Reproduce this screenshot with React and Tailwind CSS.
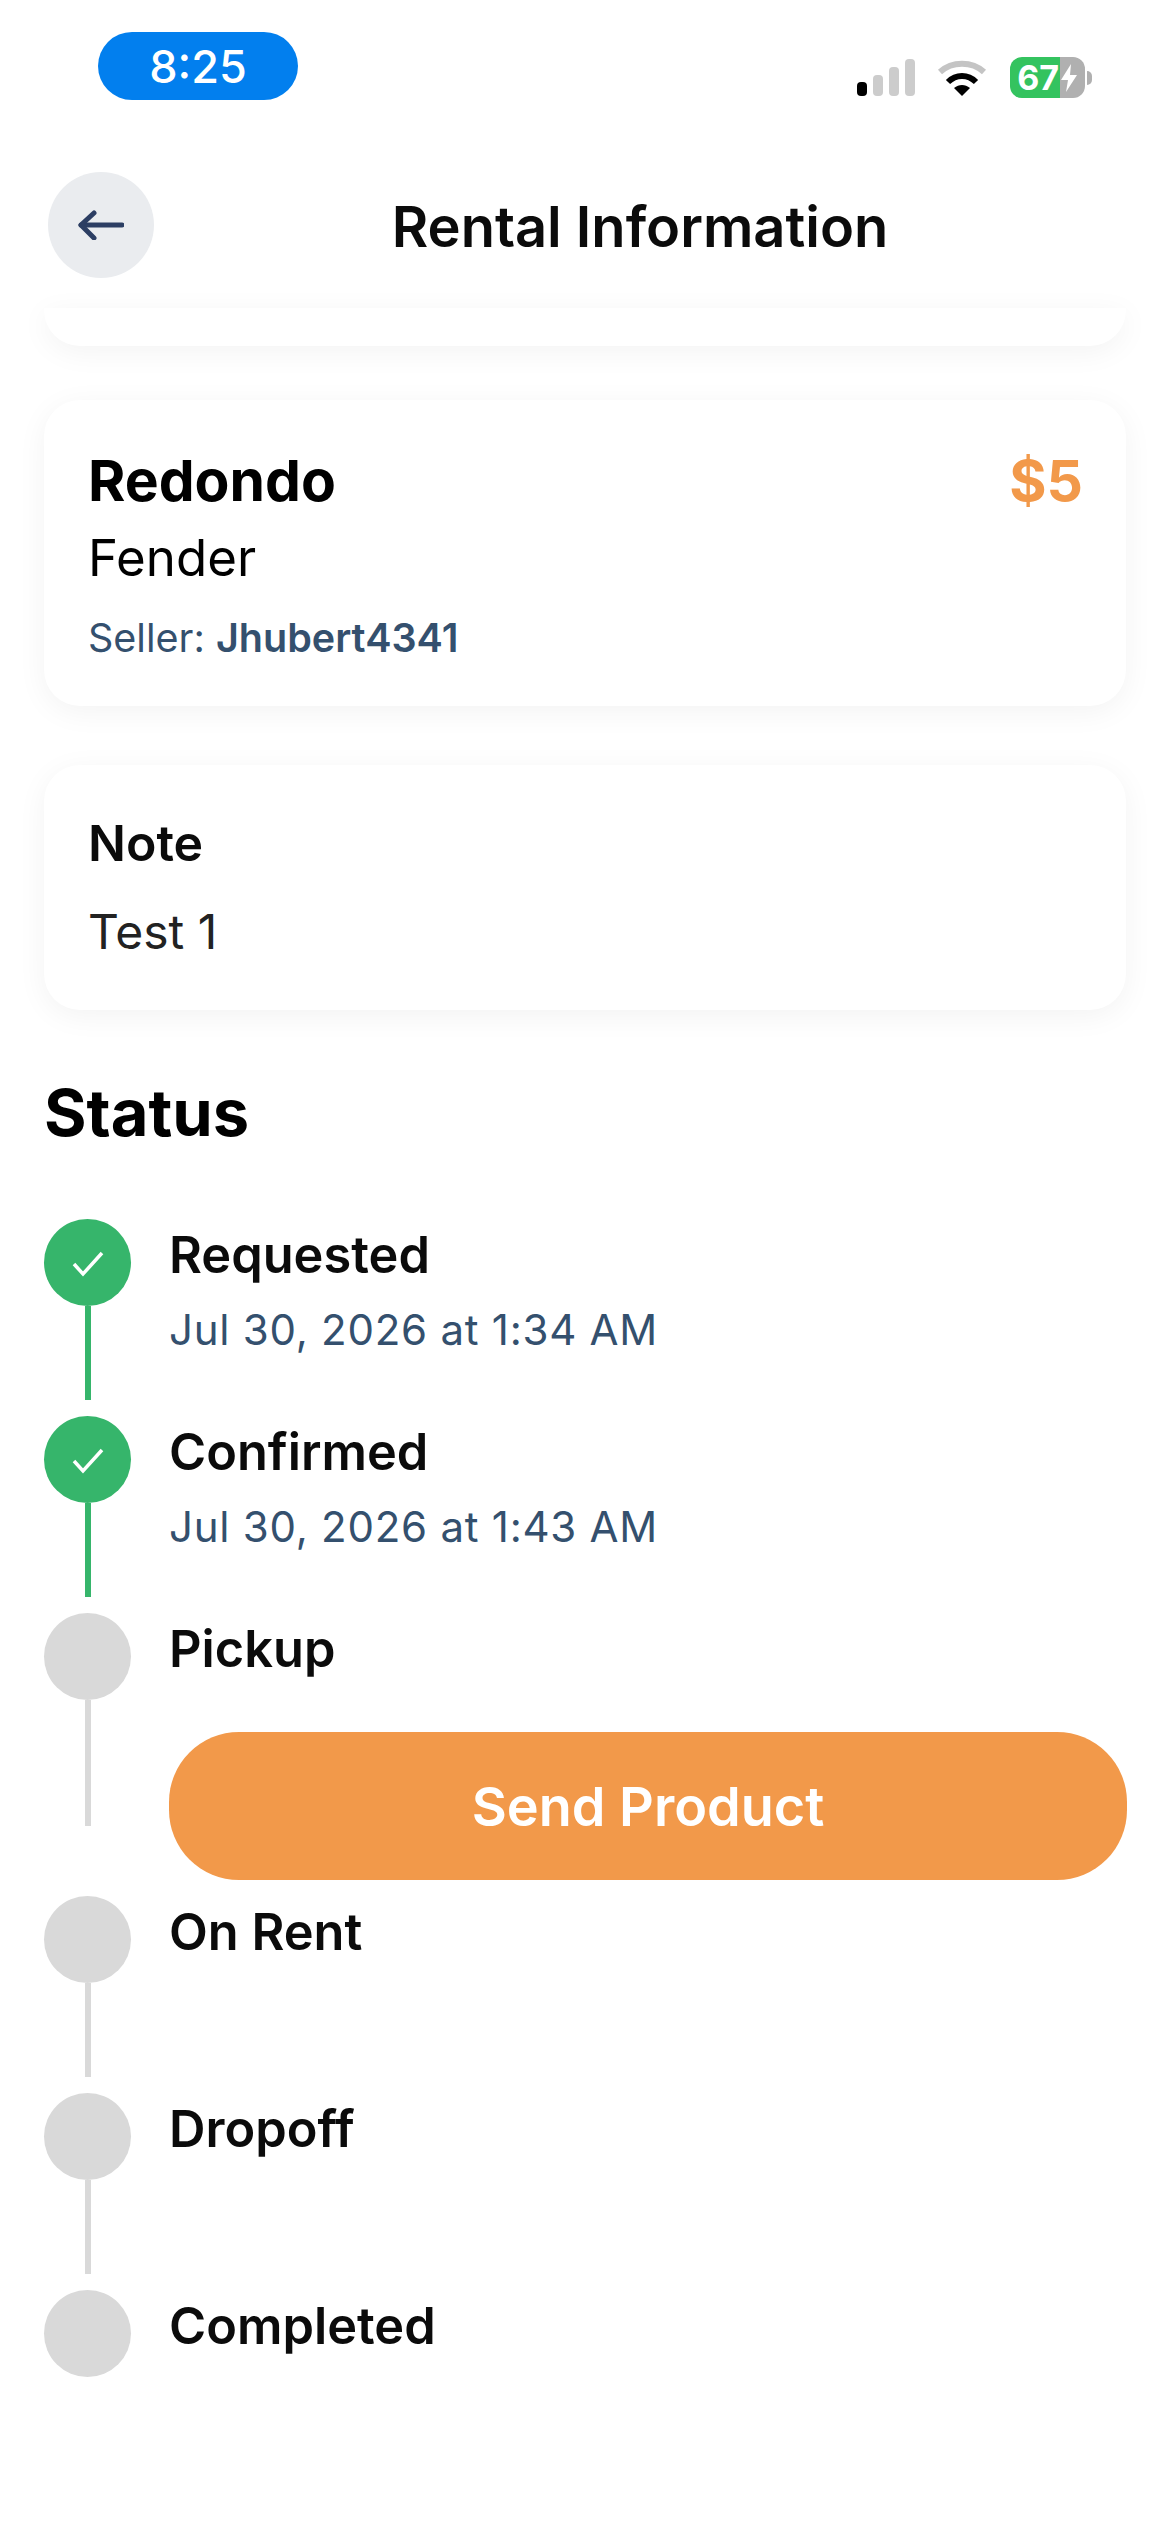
import React from 'react';

const steps = [
  { title: 'Requested', date: 'Jul 30, 2026 at 1:34 AM', done: true },
  { title: 'Confirmed', date: 'Jul 30, 2026 at 1:43 AM', done: true },
  { title: 'Pickup', action: 'Send Product', tall: true },
  { title: 'On Rent' },
  { title: 'Dropoff' },
  { title: 'Completed', last: true },
];

const SignalIcon = () => (
  <svg width="58" height="37" viewBox="0 0 58 37">
    <rect x="0" y="23" width="10" height="14" rx="4" fill="#000" />
    <rect x="16" y="16" width="10" height="21" rx="4" fill="#ccc" />
    <rect x="32" y="8" width="10" height="29" rx="4" fill="#ccc" />
    <rect x="48" y="0" width="10" height="37" rx="4" fill="#ccc" />
  </svg>
);

const WifiIcon = () => (
  <svg width="50" height="38" viewBox="0 0 50 38">
    <path d="M3 13 C15 2 35 2 47 13" fill="none" stroke="#c4c4c4" strokeWidth="6" />
    <path d="M11 23 C19 15 31 15 39 23" fill="none" stroke="#000" strokeWidth="6" />
    <path d="M17 29 C22 25 28 25 33 29 L25 37 Z" fill="#000" />
  </svg>
);

const BatteryIcon = () => (
  <div className="flex items-center gap-[2px]">
    <div className="flex w-[75px] h-[41px] rounded-[12px] overflow-hidden">
      <div className="w-[50px] bg-[#34C35F] flex items-center justify-end pr-[1px]">
        <span className="text-white text-[34px] font-bold leading-none">67</span>
      </div>
      <div className="flex-1 bg-[#B0B0B0] flex items-center justify-start">
        <svg width="18" height="28" viewBox="0 0 18 28">
          <path d="M11 0 L1 16 H8 L6 28 L17 11 H10 Z" fill="#fff" />
        </svg>
      </div>
    </div>
    <div className="w-[5px] h-[14px] rounded-r-full bg-[#B0B0B0]" />
  </div>
);

const StatusBar = () => (
  <div className="h-[106px] flex justify-between">
    <div className="ml-[98px] mt-[32px] w-[200px] h-[68px] rounded-full bg-[#027FEE] flex items-center justify-center text-white text-[45px] font-medium leading-none">
      8:25
    </div>
    <div className="mt-[57px] mr-[78px] h-[41px] flex items-center">
      <SignalIcon />
      <div className="ml-[22px] mr-[23px]">
        <WifiIcon />
      </div>
      <BatteryIcon />
    </div>
  </div>
);

const Header = () => (
  <div className="relative h-[202px] pt-[66px] pl-[48px] flex items-start">
    <button className="w-[106px] h-[106px] rounded-full bg-[#EAECEF] flex items-center justify-center">
      <svg width="46" height="30" viewBox="0 0 46 30" fill="none" stroke="#2C3E63" strokeWidth="5" strokeLinecap="round" strokeLinejoin="round">
        <path d="M44 15 H3" />
        <path d="M16 3 L3 15 L16 28" />
      </svg>
    </button>
    <h1 className="absolute left-[110px] right-0 top-[87px] text-center text-[56px] leading-[68px] font-semibold text-[#0b0b0b]">
      Rental Information
    </h1>
  </div>
);

const cardClass = 'mx-[44px] bg-white rounded-[36px] shadow-[0_6px_30px_rgba(0,0,0,0.05)]';

const Step = ({ step }) => {
  const lineColor = step.done ? 'bg-[#36B56B]' : 'bg-[#D9D9D9]';
  return (
    <div className="flex gap-[38px] pb-[16px]">
      <div className="flex flex-col items-center w-[87px] shrink-0">
        <div className={`w-[87px] h-[87px] rounded-full flex items-center justify-center ${step.done ? 'bg-[#36B56B]' : 'bg-[#D9D9D9]'}`}>
          {step.done && (
            <svg width="32" height="26" viewBox="0 0 32 26" fill="none" stroke="#fff" strokeWidth="3.5" className="mt-[3px]">
              <path d="M2 13 L11 23 L30 2" />
            </svg>
          )}
        </div>
        {!step.last && <div className={`w-[6px] ${step.tall ? 'h-[126px]' : 'h-[94px]'} ${lineColor}`} />}
      </div>
      <div className="flex-1 pt-[12px]">
        <div className="text-[50.5px] leading-[48px] font-semibold text-[#0b0b0b]">{step.title}</div>
        {step.date && (
          <div className="mt-[26px] text-[42px] leading-[50px] text-[#34506E] tracking-[0.75px]">{step.date}</div>
        )}
        {step.action && (
          <button className="mt-[59px] w-[958px] h-[148px] rounded-[70px] bg-[#F2994A] text-white text-[54px] font-semibold">
            {step.action}
          </button>
        )}
      </div>
    </div>
  );
};

export default function App() {
  return (
    <div className="w-[1170px] h-[2532px] bg-white overflow-hidden font-['Inter',sans-serif]">
      <StatusBar />
      <Header />
      <div className={`${cardClass} h-[38px] rounded-t-none`} />
      <div className={`${cardClass} mt-[54px] h-[306px] pl-[44px] pr-[43px] pt-[50px]`}>
        <div className="flex justify-between items-start">
          <div className="text-[57px] leading-[62px] font-bold text-black">Redondo</div>
          <div className="text-[57px] leading-[62px] font-bold text-[#F2994A]">$5</div>
        </div>
        <div className="mt-[16px] text-[51px] leading-[60px] text-black">Fender</div>
        <div className="mt-[26px] text-[39.5px] leading-[48px] text-[#34506E]">
          Seller: <span className="font-semibold">Jhubert4341</span>
        </div>
      </div>
      <div className={`${cardClass} mt-[59px] h-[245px] px-[44px] pt-[50px]`}>
        <div className="text-[50px] leading-[56px] font-semibold text-[#0b0b0b]">Note</div>
        <div className="mt-[36px] text-[48px] leading-[50px] text-[#222]">Test 1</div>
      </div>
      <h2 className="mt-[65px] ml-[44px] text-[65px] leading-[76px] font-bold text-black">Status</h2>
      <div className="mt-[68px] pl-[44px] pr-[44px]">
        {steps.map((step) => (
          <Step key={step.title} step={step} />
        ))}
      </div>
    </div>
  );
}
